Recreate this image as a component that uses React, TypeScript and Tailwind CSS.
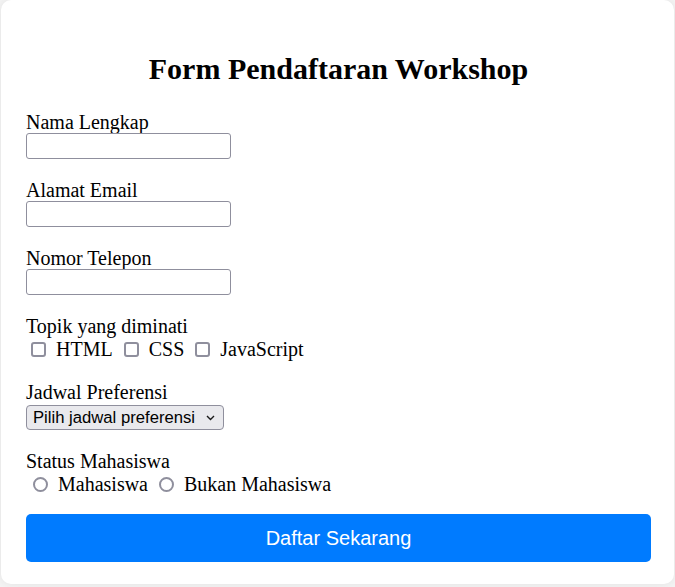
import { useState } from "react";

const serif = "font-['Liberation_Serif',_'Times_New_Roman',_serif]";

function TextField({ label, type = "text" }: { label: string; type?: string }) {
  return (
    <div className="flex flex-col items-start mb-[20px]">
      <label className="text-[20px] leading-[22px] h-[22px]">{label}</label>
      <input
        type={type}
        className="w-[205px] h-[26px] border border-[#8f8f9d] rounded-[3px] bg-white px-[3px] text-[16px] outline-none"
      />
    </div>
  );
}

export default function App() {
  const [topics, setTopics] = useState<string[]>([]);
  const [status, setStatus] = useState("");

  const toggle = (t: string) =>
    setTopics((prev) => (prev.includes(t) ? prev.filter((x) => x !== t) : [...prev, t]));

  return (
    <div className={`min-h-screen bg-[#f4f4f4] overflow-hidden text-black ${serif}`}>
      <div className="mx-[1px] bg-white rounded-[10px] shadow-[0_0_10px_rgba(0,0,0,0.08)] pt-[52px] pb-[22px] pl-[25px] pr-[23px]">
        <h2 className="text-center font-bold text-[30px] leading-[34px] mb-[25px]">
          Form Pendaftaran Workshop
        </h2>

        <form onSubmit={(e) => e.preventDefault()} className="flex flex-col">
          <TextField label="Nama Lengkap" />
          <TextField label="Alamat Email" type="email" />
          <TextField label="Nomor Telepon" type="tel" />

          <div className="flex flex-col mb-[20px]">
            <span className="text-[20px] leading-[22px] h-[22px]">Topik yang diminati</span>
            <div className="flex items-center h-[24px] text-[20px] leading-[23px]">
              {["HTML", "CSS", "JavaScript"].map((t, i) => (
                <label key={t} className={`flex items-center ${i === 0 ? "ml-[5px]" : "ml-[11px]"}`}>
                  <input
                    type="checkbox"
                    checked={topics.includes(t)}
                    onChange={() => toggle(t)}
                    className="appearance-none w-[15px] h-[15px] border-2 border-[#8f8f9d] rounded-[3px] bg-white checked:bg-[#0060df] checked:border-[#0060df]"
                  />
                  <span className="ml-[10px]">{t}</span>
                </label>
              ))}
            </div>
          </div>

          <div className="flex flex-col items-start mb-[20px]">
            <label className="text-[20px] leading-[22px] h-[22px]">Jadwal Preferensi</label>
            <div className="relative mt-[2px]">
              <select
                defaultValue=""
                className="appearance-none w-[198px] h-[25px] border border-[#8f8f9d] rounded-[4px] bg-[#e9e9ed] pl-[6px] pr-[20px] text-[16.67px] leading-[23px] font-['Liberation_Sans',_Arial,_sans-serif] text-black outline-none"
              >
                <option value="" disabled>
                  Pilih jadwal preferensi
                </option>
                <option value="pagi">Pagi</option>
                <option value="siang">Siang</option>
                <option value="malam">Malam</option>
              </select>
              <svg
                className="absolute right-[9px] top-[10px] pointer-events-none"
                width="9"
                height="6"
                viewBox="0 0 9 6"
                fill="none"
              >
                <path d="M1 1l3.5 3.5L8 1" stroke="#1b1b1b" strokeWidth="1.4" />
              </svg>
            </div>
          </div>

          <div className="flex flex-col mb-[18px]">
            <span className="text-[20px] leading-[22px] h-[22px]">Status Mahasiswa</span>
            <div className="flex items-center h-[24px] text-[20px] leading-[23px]">
              {["Mahasiswa", "Bukan Mahasiswa"].map((s, i) => (
                <label key={s} className={`flex items-center ${i === 0 ? "ml-[7px]" : "ml-[11px]"}`}>
                  <input
                    type="radio"
                    name="status"
                    checked={status === s}
                    onChange={() => setStatus(s)}
                    className="appearance-none w-[15px] h-[15px] border-2 border-[#8f8f9d] rounded-full bg-white checked:border-[5px] checked:border-[#0060df]"
                  />
                  <span className="ml-[10px]">{s}</span>
                </label>
              ))}
            </div>
          </div>

          <button
            type="submit"
            className="h-[48px] w-full rounded-[5px] bg-[#007bff] text-white text-[20px] font-['Liberation_Sans',_Arial,_sans-serif]"
          >
            Daftar Sekarang
          </button>
        </form>
      </div>
    </div>
  );
}
